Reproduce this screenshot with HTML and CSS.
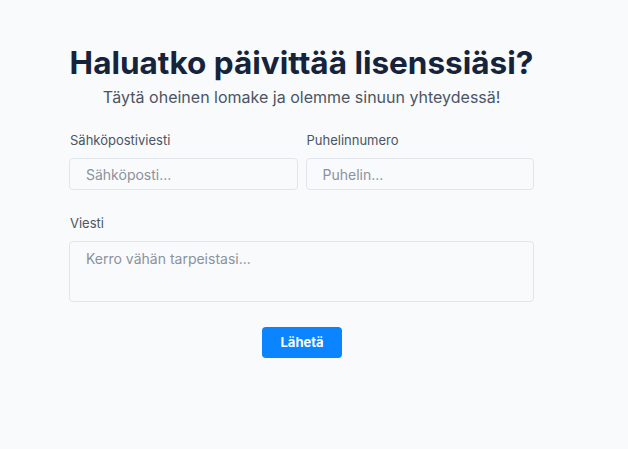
FILE: index.html
```html
<!DOCTYPE html>
<html lang="fi">
<head>
    <meta charset="UTF-8">
    <meta name="viewport" content="width=device-width, initial-scale=1.0">
    <title>Päivitä lisenssi</title>
    <link rel="stylesheet" href="styles.css">
</head>
<body>

    <div class="page">
        <div class="contact">
            <h1>Haluatko päivittää lisenssiäsi?</h1>
            <p class="lead">Täytä oheinen lomake ja olemme sinuun yhteydessä!</p>

            <form class="contact-form" onsubmit="return false">
                <div class="row">
                    <div class="field">
                        <label for="email">Sähköpostiviesti</label>
                        <input type="email" id="email" placeholder="Sähköposti...">
                    </div>
                    <div class="field">
                        <label for="phone">Puhelinnumero</label>
                        <input type="tel" id="phone" placeholder="Puhelin...">
                    </div>
                </div>

                <div class="field">
                    <label for="message">Viesti</label>
                    <textarea id="message" placeholder="Kerro vähän tarpeistasi..."></textarea>
                </div>

                <div class="actions">
                    <button type="submit" class="btn">Lähetä</button>
                </div>
            </form>
        </div>
    </div>

</body>
</html>
```

FILE: styles.css
```css
body {
    font-family: Inter, "Noto Sans", sans-serif;
    margin: 0;
    background-color: #f8fafc;
    color: #1e293b;
}
.page {
    padding: 44px 25px 40px 0;
}
.contact {
    max-width: 465px;
    margin: 0 auto;
}
h1 {
    margin: 0;
    font-size: 31.5px;
    line-height: 37px;
    font-weight: 700;
    text-align: center;
    color: #16243b;
}
.lead {
    margin: 4px 0 0;
    font-size: 16px;
    line-height: 24px;
    text-align: center;
    color: #4b5563;
}
.contact-form {
    margin-top: 21px;
}
.row {
    display: grid;
    grid-template-columns: 1fr 1fr;
    gap: 8px;
}
.field {
    display: flex;
    flex-direction: column;
    gap: 8px;
    margin-bottom: 23px;
}
label {
    font-size: 13px;
    line-height: 20px;
    color: #4b5563;
    padding-left: 1px;
}
input, textarea {
    font-family: inherit;
    font-size: 14px;
    line-height: 20px;
    color: #1e293b;
    background-color: #f9fafb;
    border: 1px solid #e2e5ea;
    border-radius: 4px;
    box-sizing: border-box;
    width: 100%;
    outline: none;
}
input {
    height: 32px;
    padding: 5px 16px;
}
textarea {
    height: 61px;
    padding: 7px 16px;
    resize: none;
}
input::placeholder, textarea::placeholder {
    color: #8a929e;
}
.actions {
    display: flex;
    justify-content: center;
    padding-top: 2px;
}
.btn {
    font-family: inherit;
    font-size: 13px;
    font-weight: 700;
    line-height: 17px;
    padding: 7px 19px;
    width: 80px;
    background-color: #0a84ff;
    color: white;
    border: none;
    border-radius: 4px;
    cursor: pointer;
}
.btn:hover {
    background-color: #0070e0;
}
```
